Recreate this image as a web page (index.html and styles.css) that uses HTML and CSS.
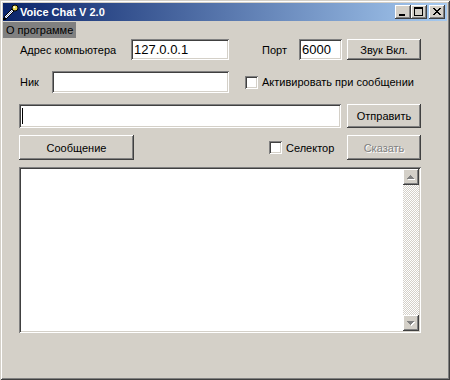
FILE: index.html
```
<!DOCTYPE html>
<html>

<head>
  <meta charset="UTF-8">
  <title>Voice Chat V 2.0</title>
  <link rel="stylesheet" href="styles.css">
</head>

<body>
  <div class="window">
    <div class="titlebar">
      <svg class="app-icon" width="16" height="16" viewBox="0 0 16 16">
        <path d="M1 13 L9 5 L11 7 L3 15 Z" fill="#ffffff" stroke="#000000" stroke-width="1" />
        <path d="M2 14 L10 6" stroke="#7a8cc0" stroke-width="1" />
        <circle cx="12" cy="4" r="3" fill="#e8d84a" stroke="#000000" stroke-width="1" />
        <circle cx="11.3" cy="3.3" r="1" fill="#ffffff" />
        <rect x="0" y="14" width="3" height="2" fill="#000000" />
      </svg>
      <span class="title">Voice Chat V 2.0</span>
      <div class="caption-buttons">
        <button class="cap-btn">
          <svg width="16" height="14" shape-rendering="crispEdges">
            <rect x="4" y="9" width="6" height="2" fill="#000" />
          </svg>
        </button>
        <button class="cap-btn">
          <svg width="16" height="14" shape-rendering="crispEdges">
            <rect x="3" y="2" width="9" height="2" fill="#000" />
            <rect x="3" y="2" width="1" height="9" fill="#000" />
            <rect x="11" y="2" width="1" height="9" fill="#000" />
            <rect x="3" y="10" width="9" height="1" fill="#000" />
          </svg>
        </button>
        <button class="cap-btn cap-close">
          <svg width="16" height="14" shape-rendering="crispEdges">
            <path d="M4 3h2v1h-2z M10 3h2v1h-2z M5 4h2v1h-2z M9 4h2v1h-2z M6 5h4v1h-4z M7 6h2v1h-2z M6 7h4v1h-4z M5 8h2v1h-2z M9 8h2v1h-2z M4 9h2v1h-2z M10 9h2v1h-2z" fill="#000" />
          </svg>
        </button>
      </div>
    </div>

    <div class="menubar">
      <span class="menu-item active">О программе</span>
    </div>

    <div class="content">
      <div class="row row-1">
        <span class="lbl lbl-addr">Адрес компьютера</span>
        <div class="field f-addr">127.0.0.1</div>
        <span class="lbl lbl-port">Порт</span>
        <div class="field f-port">6000</div>
        <button class="btn btn-side">Звук Вкл.</button>
      </div>

      <div class="row row-2">
        <span class="lbl lbl-nick">Ник</span>
        <div class="field f-nick"></div>
        <span class="check check-activate"></span>
        <span class="check-label">Активировать при сообщении</span>
      </div>

      <div class="row row-3">
        <div class="field f-message"><span class="caret"></span></div>
        <button class="btn btn-side">Отправить</button>
      </div>

      <div class="row row-4">
        <button class="btn btn-msg">Сообщение</button>
        <span class="check check-selector"></span>
        <span class="check-label">Селектор</span>
        <button class="btn btn-side btn-say" disabled>Сказать</button>
      </div>

      <div class="memo">
        <div class="scrollbar">
          <div class="scroll-btn">
            <svg width="16" height="16" shape-rendering="crispEdges">
              <path d="M8 7h1v1h-1z M7 8h3v1h-3z M6 9h5v1h-5z M5 10h7v1h-7z" fill="#ffffff" />
              <path d="M7 6h1v1h-1z M6 7h3v1h-3z M5 8h5v1h-5z M4 9h7v1h-7z" fill="#808080" />
            </svg>
          </div>
          <div class="scroll-track"></div>
          <div class="scroll-btn">
            <svg width="16" height="16" shape-rendering="crispEdges">
              <path d="M5 7h7v1h-7z M6 8h5v1h-5z M7 9h3v1h-3z M8 10h1v1h-1z" fill="#ffffff" />
              <path d="M4 6h7v1h-7z M5 7h5v1h-5z M6 8h3v1h-3z M7 9h1v1h-1z" fill="#808080" />
            </svg>
          </div>
        </div>
      </div>
    </div>
  </div>
</body>

</html>
```

FILE: styles.css
```
body {
  margin: 0;
  background: #d4d0c8;
  font-family: "Liberation Sans", Arial, sans-serif;
  font-size: 11px;
  color: #000;
}

.window {
  width: 450px;
  height: 380px;
  box-sizing: border-box;
  padding: 3px;
  background: #d4d0c8;
  box-shadow: inset 1px 1px #d4d0c8, inset -1px -1px #404040,
    inset 2px 2px #fff, inset -2px -2px #808080;
}

/* title bar */
.titlebar {
  height: 18px;
  display: flex;
  align-items: center;
  padding-right: 2px;
  background: linear-gradient(to right, #0a246a, #a6caf0);
}

.app-icon {
  display: block;
  flex: none;
}

.title {
  margin-left: 1px;
  color: #fff;
  font-weight: bold;
  font-size: 11px;
}

.caption-buttons {
  margin-left: auto;
  display: flex;
}

.cap-btn {
  width: 16px;
  height: 14px;
  padding: 0;
  border: none;
  background: #d4d0c8;
  box-shadow: inset -1px -1px #404040, inset 1px 1px #fff,
    inset -2px -2px #808080;
}

.cap-btn svg {
  display: block;
}

.cap-close {
  margin-left: 2px;
}

/* menu */
.menubar {
  height: 18px;
  display: flex;
  align-items: flex-start;
}

.menu-item {
  margin-top: 1px;
  height: 16px;
  line-height: 16px;
  padding: 0 3px 0 3px;
}

.menu-item.active {
  background: #808080;
}

/* form */
.content {
  padding-left: 16px;
  width: 402px;
}

.row {
  display: flex;
  align-items: center;
}

.row-1 {
  height: 21px;
}

.row-2 {
  height: 22px;
  margin-top: 11px;
}

.row-3 {
  height: 24px;
  margin-top: 11px;
}

.row-4 {
  height: 25px;
  margin-top: 7px;
}

.lbl {
  padding-left: 1px;
  box-sizing: border-box;
  flex: none;
}

.lbl-addr {
  width: 112px;
}

.lbl-port {
  width: 38px;
  margin-left: 32px;
}

.lbl-nick {
  width: 33px;
}

.field {
  height: 100%;
  box-sizing: border-box;
  background: #fff;
  padding: 0 3px;
  font-size: 13px;
  display: flex;
  align-items: center;
  box-shadow: inset 1px 1px #808080, inset -1px -1px #fff,
    inset 2px 2px #404040, inset -2px -2px #d4d0c8;
}

.f-addr {
  width: 98px;
}

.f-port {
  width: 43px;
}

.f-nick {
  width: 177px;
}

.f-message {
  width: 322px;
}

.caret {
  width: 1px;
  height: 16px;
  background: #000;
}

.btn {
  height: 100%;
  border: none;
  padding: 0;
  background: #d4d0c8;
  font-family: "Liberation Sans", Arial, sans-serif;
  font-size: 11px;
  color: #000;
  box-shadow: inset -1px -1px #404040, inset 1px 1px #fff,
    inset -2px -2px #808080;
}

.btn-side {
  width: 74px;
  margin-left: auto;
}

.btn-msg {
  width: 115px;
}

.btn-say {
  color: #808080;
  text-shadow: 1px 1px #fff;
}

.check {
  width: 13px;
  height: 13px;
  flex: none;
  background: #fff;
  box-shadow: inset 1px 1px #808080, inset -1px -1px #fff,
    inset 2px 2px #404040, inset -2px -2px #d4d0c8;
}

.check-activate {
  margin-left: 16px;
}

.check-selector {
  margin-left: 135px;
}

.check-label {
  margin-left: 4px;
}

/* memo */
.memo {
  margin-top: 7px;
  height: 166px;
  box-sizing: border-box;
  padding: 2px;
  background: #fff;
  display: flex;
  justify-content: flex-end;
  box-shadow: inset 1px 1px #808080, inset -1px -1px #fff,
    inset 2px 2px #404040, inset -2px -2px #d4d0c8;
}

.scrollbar {
  width: 16px;
  display: flex;
  flex-direction: column;
}

.scroll-btn {
  height: 16px;
  background: #d4d0c8;
  box-shadow: inset -1px -1px #404040, inset 1px 1px #fff,
    inset -2px -2px #808080;
}

.scroll-btn svg {
  display: block;
}

.scroll-track {
  flex: 1;
  background: conic-gradient(#d4d0c8 25%, #fff 0 50%, #d4d0c8 0 75%, #fff 0);
  background-size: 2px 2px;
}
```
